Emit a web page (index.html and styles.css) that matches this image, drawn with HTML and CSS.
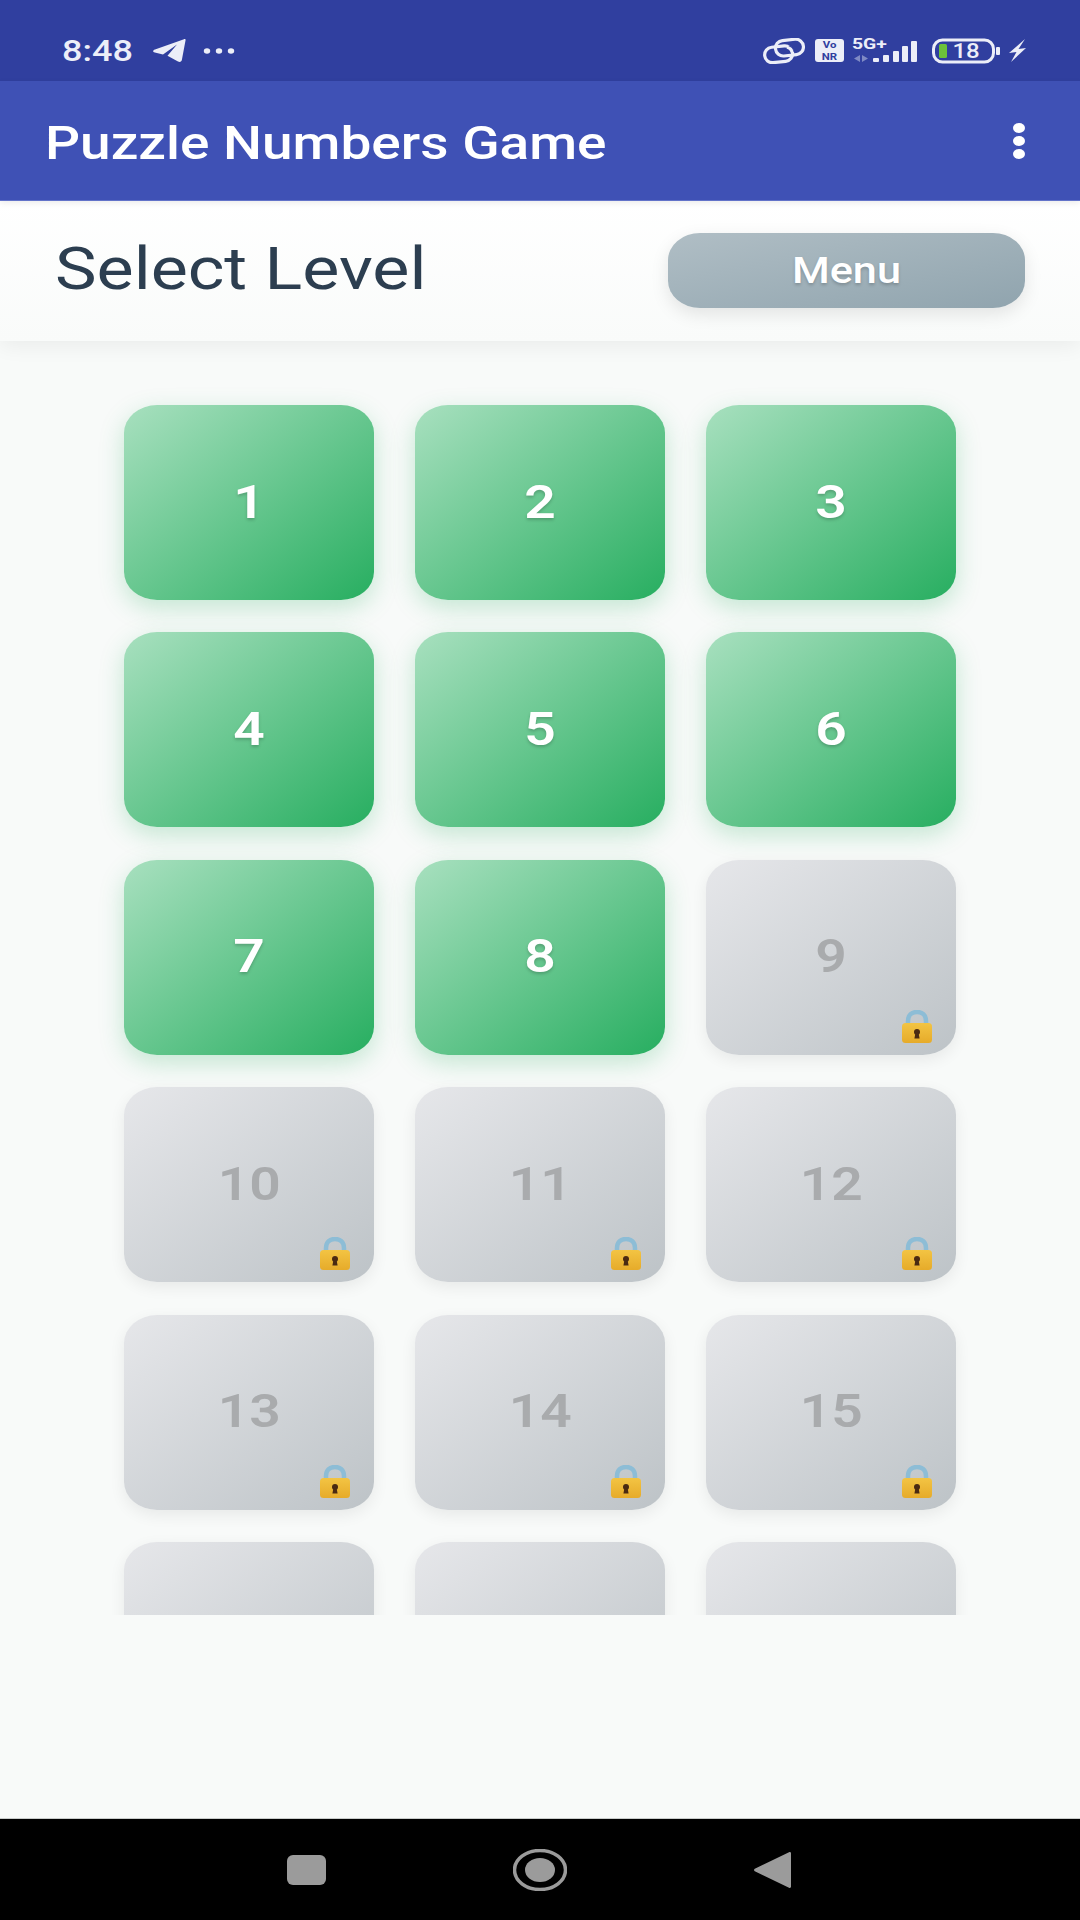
FILE: index.html
```html
<!DOCTYPE html>
<html lang="en">
<head>
    <meta charset="UTF-8">
    <meta name="viewport" content="width=device-width, initial-scale=1.0">
    <title>Puzzle Numbers Game</title>
    <link rel="stylesheet" href="styles.css">
</head>
<body>
    <svg class="defs" width="0" height="0">
        <defs>
            <linearGradient id="lockBody" x1="0" y1="0" x2="0" y2="1">
                <stop offset="0" stop-color="#f3c443"/>
                <stop offset="1" stop-color="#e6ab2a"/>
            </linearGradient>
            <symbol id="lock" viewBox="0 0 30 33">
                <path d="M6 16V11C6 5 10 2 15 2s9 3 9 9v5" fill="none" stroke="#8dbdd6" stroke-width="4.500"/>
                <rect x="0" y="13" width="30" height="20" rx="3.500" fill="url(#lockBody)"/>
                <circle cx="15" cy="22" r="3" fill="#4a2a12"/>
                <path d="M13.600 22h2.800l1.200 6.500h-5.200z" fill="#4a2a12"/>
            </symbol>
        </defs>
    </svg>

    <div class="app">
        <div class="status-bar">
            <div class="status-left">
                <span class="time"><span class="wide">8:48</span></span>
                <svg class="plane" width="33" height="23" viewBox="0 0 33 23">
                    <path d="M32.5 1.6C33 .4 32 -.2 31 .2L2 10.6C-.4 11.5 -.4 13 1.800 13.600L10 15.500 24 5.500 14.500 16.800 25 22.500C27 23.400 28.500 22.800 28.900 20.800z" fill="#eceef8"/>
                </svg>
                <svg class="dots" width="32" height="8" viewBox="0 0 32 8">
                    <ellipse cx="4" cy="4" rx="3.200" ry="2.700" fill="#eceef8"/>
                    <ellipse cx="16" cy="4" rx="3.200" ry="2.700" fill="#eceef8"/>
                    <ellipse cx="28" cy="4" rx="3.200" ry="2.700" fill="#eceef8"/>
                </svg>
            </div>
            <div class="status-right">
                <svg width="42" height="26" viewBox="0 0 42 26">
                    <g fill="none" stroke-width="3.200">
                        <rect x="1.600" y="8.600" width="28" height="15.500" rx="7.700" stroke="#eceef8" transform="rotate(-6 15 16)"/>
                        <rect x="12.400" y="1.900" width="28" height="15.500" rx="7.700" stroke="#eceef8" transform="rotate(-6 26 9)"/>
                        <path d="M25 9.500c2 .8 3.500 2.500 3.800 4.500" stroke="#303f9f" stroke-width="5"/>
                        <path d="M24 9.300c3 .8 4.800 2.700 5 5" stroke="#eceef8"/>
                    </g>
                </svg>
                <span class="vonr"><span class="wide">Vo</span><span class="wide">NR</span></span>
                <svg class="network" width="65" height="30" viewBox="0 0 65 30">
                    <text class="net-label" x="0" y="15" transform="scale(1.25 1)">5G+</text>
                    <path d="M2 24.500l6 -3.500v7zM10 21v7l6 -3.500z" fill="#7f8ac4"/>
                    <rect x="21" y="24" width="6" height="4" rx="1" fill="#eceef8"/>
                    <rect x="31" y="21" width="6" height="7" rx="1" fill="#eceef8"/>
                    <rect x="41" y="17" width="6" height="11" rx="1" fill="#eceef8"/>
                    <rect x="50" y="12" width="6" height="16" rx="1" fill="#eceef8"/>
                    <rect x="59" y="7" width="6" height="21" rx="1" fill="#eceef8"/>
                </svg>
                <svg class="battery" width="68" height="26" viewBox="0 0 68 26">
                    <rect x="1.500" y="2" width="60" height="22" rx="9" fill="none" stroke="#eceef8" stroke-width="3"/>
                    <rect x="7" y="6" width="8" height="14" rx="1.500" fill="#6cc23a"/>
                    <text class="battery-label" x="17" y="20" transform="scale(1.2 1)">18</text>
                    <rect x="64" y="9" width="4" height="8" rx="1" fill="#eceef8"/>
                </svg>
                <svg class="bolt" width="18" height="23" viewBox="0 0 18 23">
                    <path d="M17 0 1 14l7.500 -1L3 23 18 9l-7.500 1z" fill="#eceef8"/>
                </svg>
            </div>
        </div>

        <header class="app-bar">
            <h1 class="app-title"><span class="wide">Puzzle Numbers Game</span></h1>
            <div class="kebab">
                <span class="kebab-dot"></span>
                <span class="kebab-dot"></span>
                <span class="kebab-dot"></span>
            </div>
        </header>

        <section class="level-header">
            <h2 class="level-title"><span class="wide">Select Level</span></h2>
            <button class="menu-button"><span class="wide">Menu</span></button>
        </section>

        <main class="level-scroll">
            <div class="level-grid">
                <div class="level open"><span class="wide">1</span></div>
                <div class="level open"><span class="wide">2</span></div>
                <div class="level open"><span class="wide">3</span></div>
                <div class="level open"><span class="wide">4</span></div>
                <div class="level open"><span class="wide">5</span></div>
                <div class="level open"><span class="wide">6</span></div>
                <div class="level open"><span class="wide">7</span></div>
                <div class="level open"><span class="wide">8</span></div>
                <div class="level locked"><span class="wide">9</span><svg class="lock"><use href="#lock"/></svg></div>
                <div class="level locked"><span class="wide">10</span><svg class="lock"><use href="#lock"/></svg></div>
                <div class="level locked"><span class="wide">11</span><svg class="lock"><use href="#lock"/></svg></div>
                <div class="level locked"><span class="wide">12</span><svg class="lock"><use href="#lock"/></svg></div>
                <div class="level locked"><span class="wide">13</span><svg class="lock"><use href="#lock"/></svg></div>
                <div class="level locked"><span class="wide">14</span><svg class="lock"><use href="#lock"/></svg></div>
                <div class="level locked"><span class="wide">15</span><svg class="lock"><use href="#lock"/></svg></div>
                <div class="level locked"></div>
                <div class="level locked"></div>
                <div class="level locked"></div>
            </div>
        </main>

        <div class="spacer"></div>

        <nav class="nav-bar">
            <svg width="39" height="30" viewBox="0 0 39 30">
                <rect width="39" height="30" rx="6" fill="#9b9b9b"/>
            </svg>
            <svg width="54" height="42" viewBox="0 0 54 42">
                <ellipse cx="27" cy="21" rx="25.500" ry="19.500" fill="none" stroke="#9b9b9b" stroke-width="3.500"/>
                <ellipse cx="27" cy="21" rx="15" ry="12" fill="#9b9b9b"/>
            </svg>
            <svg width="37" height="36" viewBox="0 0 37 36">
                <path d="M35 .3c1.200 -.6 2 0 2 1.200v33c0 1.200 -.8 1.800 -2 1.200L.8 19.200c-1 -.6 -1 -1.800 0 -2.400z" fill="#9b9b9b"/>
            </svg>
        </nav>
    </div>
</body>
</html>
```

FILE: styles.css
```css
* {
    box-sizing: border-box;
}

body {
    margin: 0;
    font-family: Roboto, "Noto Sans", sans-serif;
    background-color: #f8faf9;
}

.defs {
    display: block;
    height: 0;
}

.app {
    display: flex;
    flex-direction: column;
    width: 1080px;
    height: 1920px;
    overflow: hidden;
}

.wide {
    display: inline-block;
    transform: scaleX(1.2);
}

.status-bar {
    display: flex;
    justify-content: space-between;
    align-items: center;
    height: 81px;
    padding: 20px 54px 0 62px;
    background-color: #303f9f;
    flex-shrink: 0;
}

.status-left {
    display: flex;
    align-items: center;
}

.time {
    width: 91px;
    font-size: 30px;
    font-weight: 500;
    color: #eceef8;
}

.time .wide {
    transform-origin: left center;
}

.dots {
    margin-left: 17px;
}

.status-right {
    display: flex;
    align-items: center;
}

.vonr {
    display: flex;
    flex-direction: column;
    align-items: center;
    justify-content: center;
    width: 29px;
    height: 23px;
    margin-left: 10px;
    font-size: 9.500px;
    line-height: 11.500px;
    font-weight: 700;
    color: #303f9f;
    background-color: #eceef8;
    border-radius: 3px;
}

.network {
    margin-left: 8px;
    margin-top: -4px;
}

.net-label {
    font-family: Roboto, sans-serif;
    font-size: 15.500px;
    font-weight: 700;
    fill: #eceef8;
}

.battery {
    margin-left: 15px;
}

.battery-label {
    font-family: Roboto, sans-serif;
    font-size: 20px;
    font-weight: 500;
    fill: #eceef8;
}

.bolt {
    margin-left: 8px;
}

.app-bar {
    display: flex;
    justify-content: space-between;
    align-items: center;
    height: 120px;
    padding: 0 55px 0 45px;
    background-color: #3f51b5;
    border-bottom: 1px solid #6373c9;
    box-shadow: 0 2px 6px rgba(0, 0, 0, 0.08);
    flex-shrink: 0;
    position: relative;
    z-index: 2;
}

.app-title {
    margin: 6px 0 0;
    font-size: 45.800px;
    font-weight: 500;
    color: #fff;
}

.app-title .wide {
    transform-origin: left center;
}

.kebab {
    display: flex;
    flex-direction: column;
    gap: 3px;
}

.kebab-dot {
    width: 12px;
    height: 10px;
    border-radius: 50%;
    background-color: #fff;
}

.level-header {
    display: flex;
    justify-content: space-between;
    align-items: center;
    height: 140px;
    padding: 0 55px;
    background: linear-gradient(to bottom, #fff, #f9fbfa);
    box-shadow: 0 5px 20px rgba(0, 0, 0, 0.06);
    flex-shrink: 0;
    position: relative;
    z-index: 1;
}

.level-title {
    margin: -4px 0 0;
    font-size: 58.300px;
    font-weight: 400;
    color: #2c3e50;
}

.level-title .wide {
    transform-origin: left center;
}

.menu-button {
    width: 357px;
    height: 75px;
    margin-top: -1px;
    border: none;
    border-radius: 32px / 27px;
    font-family: Roboto, sans-serif;
    font-size: 36px;
    font-weight: 500;
    color: #fff;
    text-shadow: 0 2px 3px rgba(0, 0, 0, 0.2);
    background: linear-gradient(to bottom right, #b0bec5, #90a4ae);
    box-shadow: 0 6px 18px rgba(0, 0, 0, 0.1);
}

.level-scroll {
    height: 1274px;
    padding: 64px 124px 0;
    overflow: hidden;
    flex-shrink: 0;
}

.level-grid {
    display: grid;
    grid-template-columns: repeat(3, 250px);
    grid-auto-rows: 195px;
    gap: 32.400px 41px;
}

.level {
    display: flex;
    justify-content: center;
    align-items: center;
    position: relative;
    padding-bottom: 2px;
    border-radius: 33px / 28px;
    font-size: 46px;
    font-weight: 600;
}

.level.open {
    color: #fff;
    text-shadow: 0 2px 3px rgba(0, 0, 0, 0.2);
    background: linear-gradient(to bottom right, #a8e0bf, #27ae60);
    box-shadow: 0 8px 24px rgba(39, 174, 96, 0.25);
}

.level.locked {
    color: #a9abad;
    background: linear-gradient(to bottom right, #e6e7ea, #bdc3c7);
    box-shadow: 0 5px 16px rgba(0, 0, 0, 0.07);
}

.lock {
    position: absolute;
    right: 24px;
    bottom: 12px;
    width: 30px;
    height: 33px;
}

.spacer {
    flex: 1;
}

.nav-bar {
    display: flex;
    justify-content: center;
    align-items: center;
    gap: 187px;
    height: 102px;
    padding-right: 3px;
    background-color: #000;
    border-top: 1px solid #c9cccb;
    flex-shrink: 0;
}
```
